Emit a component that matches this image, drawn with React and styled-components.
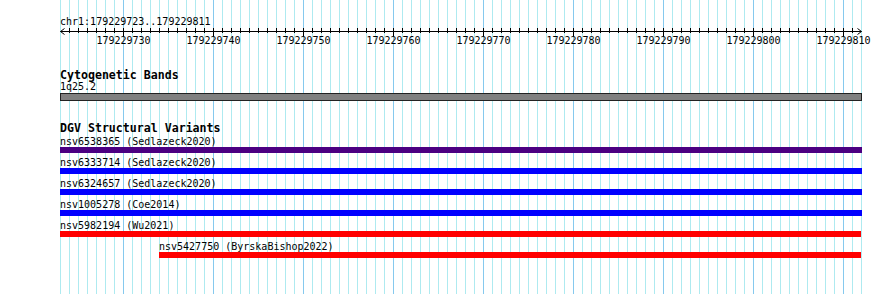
import React from "react";
import styled, {createGlobalStyle} from "styled-components";

const BP = 9;
const START = 179229723;
const END = 179229811;
const VIEW_W = 802;

const variants = [
    {name: "nsv6538365", source: "Sedlazeck2020", color: "#4b0082", start: 0, end: 120},
    {name: "nsv6333714", source: "Sedlazeck2020", color: "#0000ff", start: 0, end: 120},
    {name: "nsv6324657", source: "Sedlazeck2020", color: "#0000ff", start: 0, end: 120},
    {name: "nsv1005278", source: "Coe2014", color: "#0000ff", start: 0, end: 120},
    {name: "nsv5982194", source: "Wu2021", color: "#ff0000", start: 0, end: 89},
    {name: "nsv5427750", source: "ByrskaBishop2022", color: "#ff0000", start: 11, end: 89},
];

const GlobalStyle = createGlobalStyle`
  html, body {
    margin: 0;
    padding: 0;
    background: #fff;
  }
  body {
    font-family: "DejaVu Sans Mono", monospace;
    color: #000;
    overflow: hidden;
  }
`;

const View = styled.div`
  margin-left: 60px;
  width: ${VIEW_W}px;
  min-height: 294px;
  box-sizing: border-box;
  padding-top: 16.5px;
  background-image: linear-gradient(to right, #86c9ee 0 1px, transparent 1px),
    linear-gradient(to right, #aeeaf0 0 1px, transparent 1px);
  background-size: 90px 100%, 9px 100%;
  background-position: 63px 0, 0 0;
  background-repeat: repeat-x, repeat-x;
`;

const Location = styled.div`
  font-size: 10px;
  line-height: 10px;
  height: 10px;
  white-space: nowrap;
`;

const Ruler = styled.svg`
  display: block;
  overflow: visible;
  margin-top: 0.5px;
  font-family: "DejaVu Sans Mono", monospace;
  font-size: 10px;
`;

const TrackTitle = styled.div`
  font-size: 11.6px;
  font-weight: bold;
  line-height: 11px;
  height: 11px;
  margin-top: ${(p) => p.$gap}px;
  white-space: nowrap;
`;

const BandLabel = styled.div`
  font-size: 10px;
  line-height: 10px;
  height: 10px;
  margin-top: 1px;
`;

const BandBar = styled.div`
  margin-top: 1.5px;
  height: 8px;
  box-sizing: border-box;
  border: 1px solid #222;
  background: #808080;
`;

const FeatureList = styled.div`
  display: flex;
  flex-direction: column;
  gap: 4px;
  margin-top: 2.5px;
`;

const Feature = styled.div`
  display: flex;
  flex-direction: column;
`;

const FeatureLabel = styled.div`
  font-size: 10px;
  line-height: 11px;
  height: 11px;
  white-space: nowrap;
`;

const FeatureBar = styled.div`
  height: 6px;
  background: ${(p) => p.$color};
`;

function ScaleBar() {
    const ticks = [];
    for (let i = 1; i < END - START + 1; i++) {
        const x = i * BP + 0.5;
        const major = (START + i) % 10 === 0;
        ticks.push(
            <line key={i} x1={x} x2={x} y1={1} y2={major ? 9 : 6} stroke="#000" strokeWidth="1"/>
        );
        if (major) {
            ticks.push(
                <text key={"t" + i} x={x} y={16.5} textAnchor="middle" fill="#000">
                    {START + i}
                </text>
            );
        }
    }
    const right = (END - START + 1) * BP + 0.5;
    return (
        <Ruler width={VIEW_W} height={20}>
            <line x1={0.5} x2={right} y1={4.5} y2={4.5} stroke="#000" strokeWidth="1"/>
            <polyline points={`4.5,1.5 0.5,4.5 4.5,7.5`} fill="none" stroke="#000" strokeWidth="1"/>
            <polyline points={`${right - 4},1.5 ${right},4.5 ${right - 4},7.5`} fill="none" stroke="#000" strokeWidth="1"/>
            {ticks}
        </Ruler>
    );
}

export default function App() {
    return (
        <>
            <GlobalStyle/>
            <View>
                <Location>chr1:{START}..{END}</Location>
                <ScaleBar/>

                <TrackTitle $gap={22.5}>Cytogenetic Bands</TrackTitle>
                <BandLabel>1q25.2</BandLabel>
                <BandBar/>

                <TrackTitle $gap={21.5}>DGV Structural Variants</TrackTitle>
                <FeatureList>
                    {variants.map((v) => {
                        const left = v.start * BP;
                        const width = Math.min(v.end * BP, VIEW_W) - left;
                        return (
                            <Feature key={v.name} style={{marginLeft: left, width}}>
                                <FeatureLabel>{v.name} ({v.source})</FeatureLabel>
                                <FeatureBar $color={v.color}/>
                            </Feature>
                        );
                    })}
                </FeatureList>
            </View>
        </>
    );
}
